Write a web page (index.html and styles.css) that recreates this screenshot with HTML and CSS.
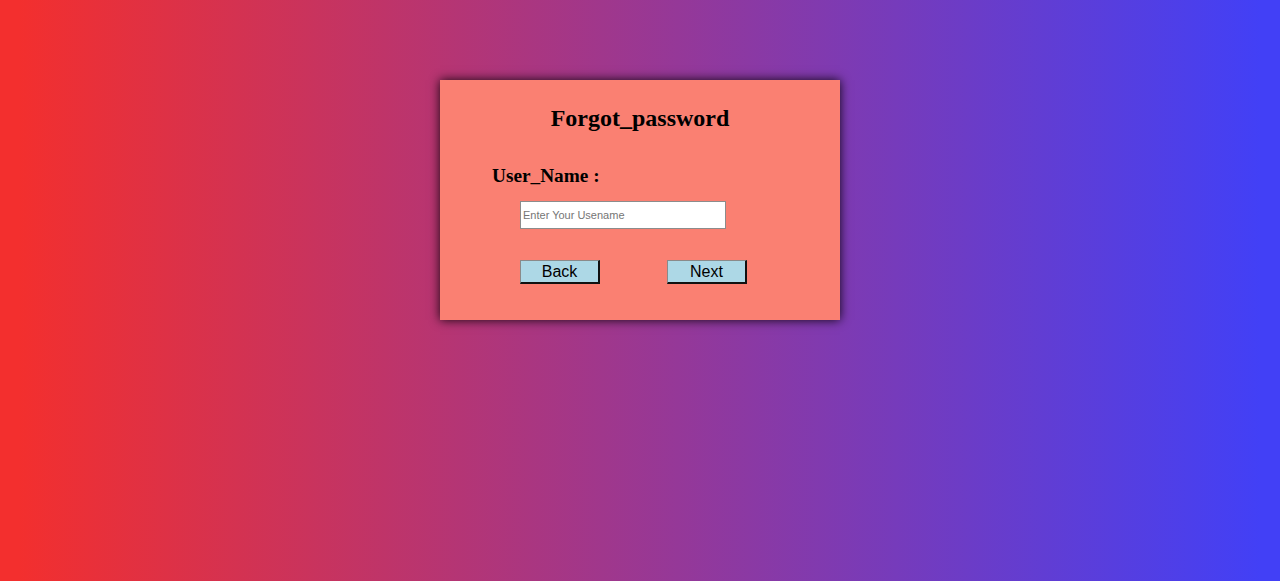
FILE: index.html
```html
<!DOCTYPE html>
<html>
<head>
<meta charset="utf-8">
<link rel="stylesheet" href="styles.css">
</head>
<body>
<div class="page">
  <div class="card">
    <h2 class="title">Forgot_password</h2>
    <h3 class="label">User_Name :</h3>
    <input class="field" type="text" placeholder="Enter Your Usename">
    <div class="actions">
      <button class="btn">Back</button>
      <button class="btn">Next</button>
    </div>
  </div>
</div>
</body>
</html>
```
FILE: styles.css
```css
html, body {
  margin: 0;
  padding: 0;
}
body {
  font-family: "Liberation Serif", "Times New Roman", serif;
}
.page {
  height: 581px;
  background: linear-gradient(to right, #f32f2e 0%, #f32f2e 1.5%, #4240f6 98.5%, #4240f6 100%);
  padding-top: 80px;
  box-sizing: border-box;
}
.card {
  width: 400px;
  height: 240px;
  margin: 0 auto;
  background: #fa8072;
  box-shadow: 0 0 10px rgba(0, 0, 0, 0.9);
  box-sizing: border-box;
  padding-top: 24px;
  display: flex;
  flex-direction: column;
}
.title {
  margin: 0;
  font-size: 24px;
  line-height: 28px;
  font-weight: bold;
  text-align: center;
}
.label {
  margin: 33px 0 0 52px;
  font-size: 19.3px;
  line-height: 22px;
  font-weight: bold;
}
.field {
  margin: 14px 0 0 80px;
  width: 206px;
  height: 28px;
  box-sizing: border-box;
  padding: 1px 2px;
  border: 1px solid #8c8c8c;
  font-family: "Liberation Sans", Arial, sans-serif;
  font-size: 11px;
  background: #fff;
}
.field::placeholder {
  color: #757575;
}
.actions {
  margin: 31px 0 0 80px;
  display: flex;
  gap: 67px;
}
.btn {
  width: 80px;
  height: 24px;
  box-sizing: border-box;
  padding: 0;
  background: #add8e6;
  border-color: #8a8a8a #111 #111 #8a8a8a;
  border-width: 1px 2px 2px 1px;
  border-style: solid;
  font-family: "Liberation Sans", Arial, sans-serif;
  font-size: 16px;
  color: #000;
}
```
